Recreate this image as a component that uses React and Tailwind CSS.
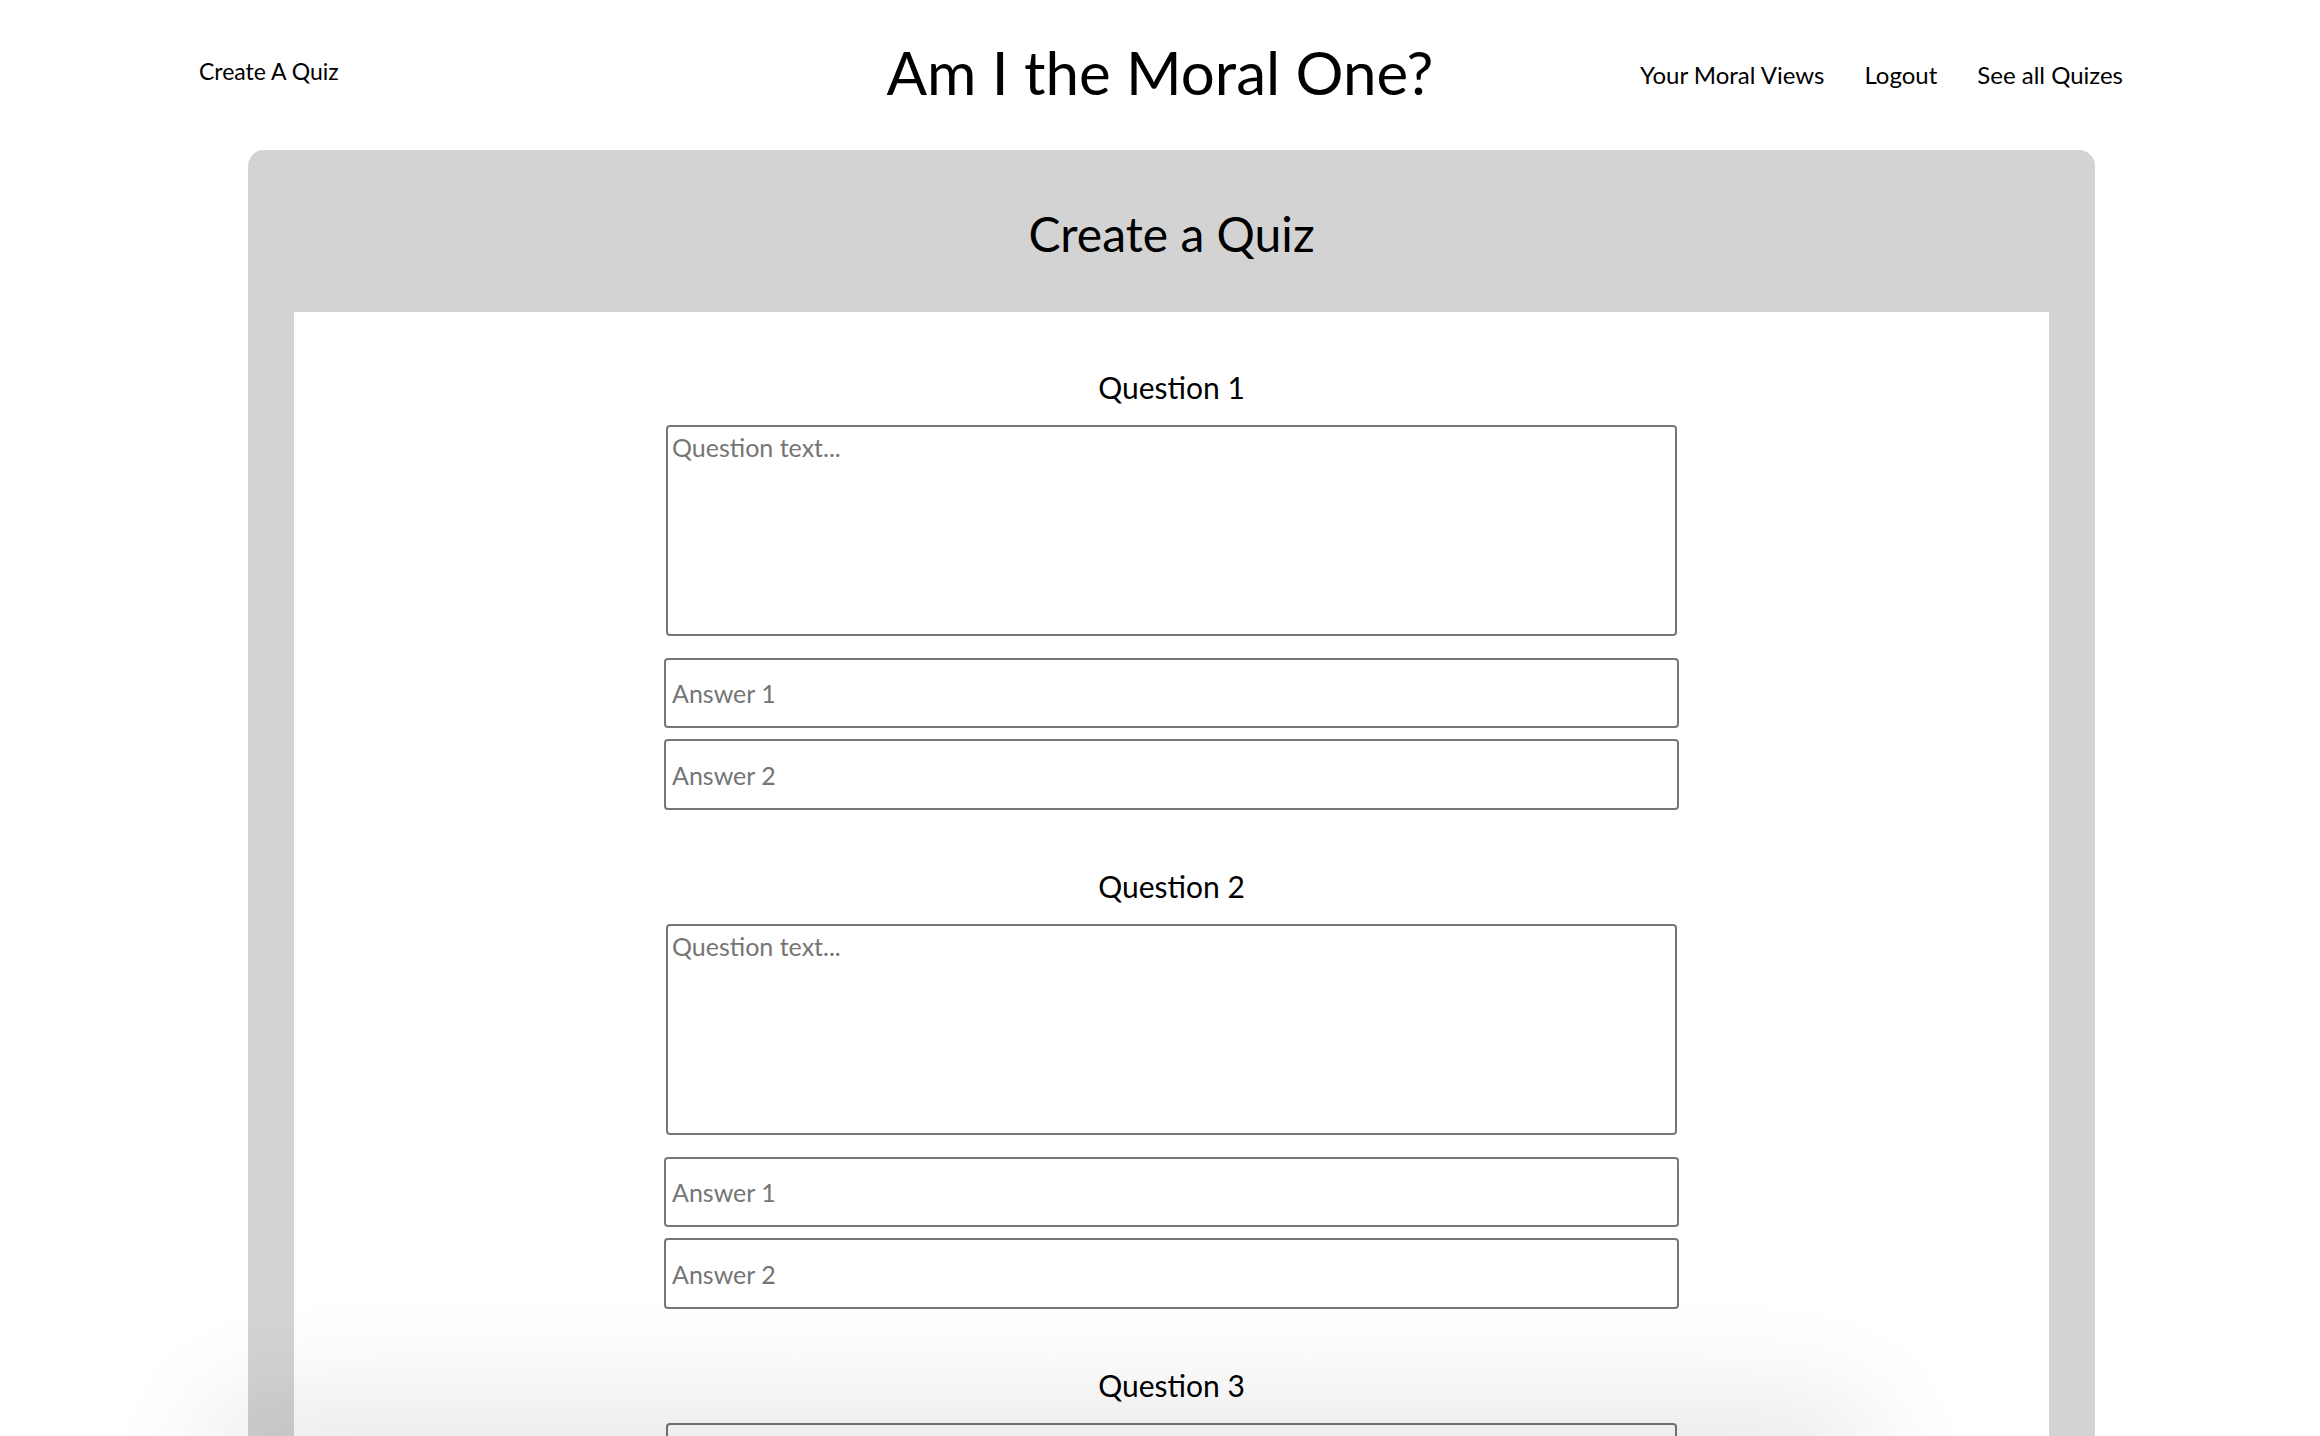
import React from "react";

const questions = [1, 2, 3, 4, 5];

function QuestionBlock({ n }) {
  return (
    <div className="flex flex-col items-center">
      <h3 className="text-[30px] leading-[32px] font-normal text-black">Question {n}</h3>
      <textarea
        placeholder="Question text..."
        className="mt-[22px] w-[1011px] h-[211px] resize-none border-2 border-[#767676] rounded-[4px] p-[4px] text-[25px] leading-[32px] text-black placeholder:text-[#757575] bg-white outline-none"
      />
      <input
        placeholder="Answer 1"
        className="mt-[22px] w-[1015px] h-[70px] border-2 border-[#767676] rounded-[4px] px-[6px] text-[25px] text-black placeholder:text-[#757575] bg-white outline-none"
      />
      <input
        placeholder="Answer 2"
        className="mt-[11px] w-[1015px] h-[71px] border-2 border-[#767676] rounded-[4px] px-[6px] text-[25px] text-black placeholder:text-[#757575] bg-white outline-none"
      />
    </div>
  );
}

export default function App() {
  return (
    <div className="min-h-screen bg-white text-black font-['Gill_Sans','Gill_Sans_MT',Lato,sans-serif]">
      {/* top nav */}
      <header className="grid grid-cols-[1fr_auto_1fr] items-start h-[150px]">
        <div className="pl-[199px] pt-[59px]">
          <a className="text-[23px] leading-[24px] cursor-pointer">Create A Quiz</a>
        </div>
        <h1 className="pt-[40px] text-[60px] leading-[64px] font-normal whitespace-nowrap">Am I the Moral One?</h1>
        <nav className="flex justify-end gap-[40px] pr-[197px] pt-[63px] text-[24px] leading-[24px]">
          <a className="cursor-pointer">Your Moral Views</a>
          <a className="cursor-pointer">Logout</a>
          <a className="cursor-pointer">See all Quizes</a>
        </nav>
      </header>

      {/* panel */}
      <main className="ml-[248px] w-[1847px] bg-[#d3d3d3] rounded-t-[16px] px-[46px]">
        <div className="h-[162px] flex justify-center pt-[59px]">
          <h2 className="text-[48px] leading-[50px] font-normal">Create a Quiz</h2>
        </div>
        <div className="bg-white pt-[59px] pb-[60px] flex flex-col gap-[60px]">
          {questions.map((n) => (
            <QuestionBlock key={n} n={n} />
          ))}
        </div>
      </main>

      {/* soft shadow at the bottom edge of the window */}
      <div className="pointer-events-none fixed left-[240px] w-[1600px] top-[1436px] h-[60px] rounded-full shadow-[0_0_110px_40px_rgba(0,0,0,0.09)]" />
    </div>
  );
}
